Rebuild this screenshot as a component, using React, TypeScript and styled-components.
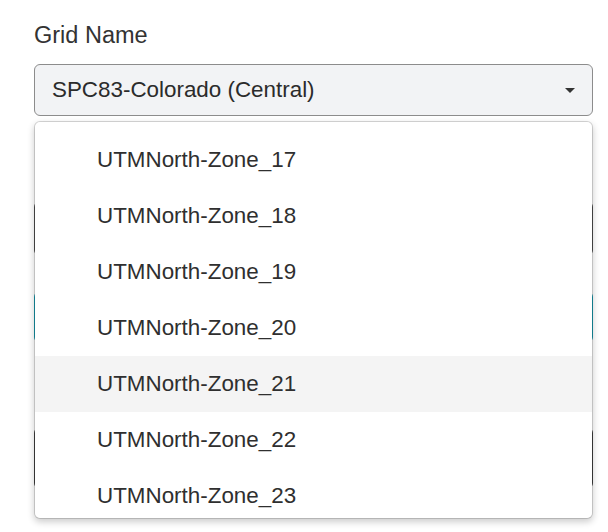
import styled, { createGlobalStyle } from "styled-components";

const GlobalStyle = createGlobalStyle`
  html, body {
    margin: 0;
    padding: 0;
    background: #ffffff;
  }
  body {
    font-family: "Liberation Sans", Arial, Helvetica, sans-serif;
    color: #333333;
  }
`;

const StyledPage = styled.div`
  width: 608px;
  height: 532px;
  overflow: hidden;
  padding: 21px 15px 0 34px;
  box-sizing: border-box;
`;

const StyledLabel = styled.div`
  font-size: 23.5px;
  line-height: 28px;
  color: #333333;
  margin-bottom: 15px;
`;

const StyledSelectWrap = styled.div`
  position: relative;
  z-index: 2;
`;

const StyledSelect = styled.div`
  height: 52px;
  box-sizing: border-box;
  display: flex;
  align-items: center;
  justify-content: space-between;
  padding: 0 17px 0 17px;
  background: #f2f3f5;
  border: 1px solid #8c8c8c;
  border-radius: 6px;
  font-size: 22.4px;
  color: #2b2b2b;
`;

const StyledCaret = styled.span`
  width: 0;
  height: 0;
  border-left: 5px solid transparent;
  border-right: 5px solid transparent;
  border-top: 5px solid #333333;
  margin-top: 1px;
`;

const StyledMenu = styled.div`
  position: absolute;
  top: calc(100% + 5px);
  left: 0;
  right: 0;
  height: 398px;
  box-sizing: border-box;
  background: #ffffff;
  background-clip: padding-box;
  border: 1px solid rgba(0, 0, 0, 0.15);
  border-radius: 6px;
  box-shadow: 0 3px 7px rgba(0, 0, 0, 0.2);
  overflow: hidden;
`;

const StyledList = styled.ul`
  list-style: none;
  margin: 0;
  padding: 10px 0 0;
`;

const StyledOption = styled.li<{ active?: boolean }>`
  height: 56px;
  display: flex;
  align-items: center;
  padding-left: 62px;
  font-size: 22.4px;
  color: #2f2f2f;
  background: ${({ active }) => (active ? "#f4f4f4" : "transparent")};
`;

const StyledField = styled.div<{ gap: number; h: number; tone: string }>`
  margin-top: ${({ gap }) => gap}px;
  height: ${({ h }) => h}px;
  box-sizing: border-box;
  border: 1px solid ${({ tone }) => tone};
  border-radius: 6px;
  background: #ffffff;
`;

const zones = [17, 18, 19, 20, 21, 22, 23];

export default function App() {
  return (
    <>
      <GlobalStyle />
      <StyledPage>
        <StyledLabel>Grid Name</StyledLabel>
        <StyledSelectWrap>
          <StyledSelect>
            <span>SPC83-Colorado (Central)</span>
            <StyledCaret />
          </StyledSelect>
          <StyledMenu>
            <StyledList>
              {zones.map((z) => (
                <StyledOption key={z} active={z === 21}>
                  UTMNorth-Zone_{z}
                </StyledOption>
              ))}
            </StyledList>
          </StyledMenu>
        </StyledSelectWrap>
        <StyledField gap={85} h={55} tone="#555555" />
        <StyledField gap={35} h={52} tone="#17a2b8" />
        <StyledField gap={84} h={62} tone="#444444" />
      </StyledPage>
    </>
  );
}
